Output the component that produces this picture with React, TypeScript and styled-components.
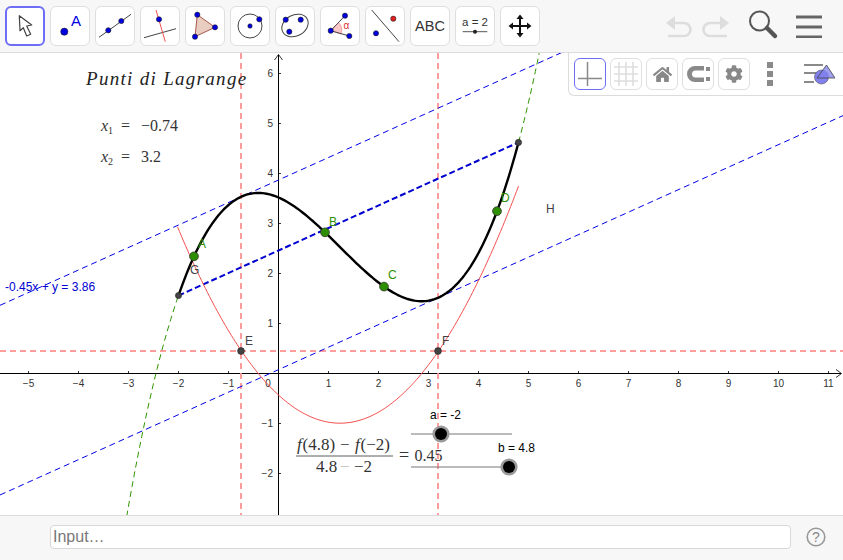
import React from 'react';
import styled, { createGlobalStyle } from 'styled-components';
import { FaCog, FaHome } from 'react-icons/fa';

const GlobalStyle = createGlobalStyle`
  html, body {
    margin: 0;
    padding: 0;
    overflow: hidden;
    background: #ffffff;
    font-family: "Liberation Sans", Arial, sans-serif;
  }
`;

const Page = styled.div`
  width: 843px;
  height: 560px;
  display: flex;
  flex-direction: column;
`;

const Toolbar = styled.div`
  height: 53px;
  box-sizing: border-box;
  flex: none;
  display: flex;
  align-items: flex-start;
  padding: 6px 20px 0 5px;
  background: #f7f7f7;
  border-bottom: 1px solid #dcdcdc;
`;

const ToolGroup = styled.div`
  display: flex;
  gap: 5px;
`;

const ToolButton = styled.div<{ $active?: boolean }>`
  width: 40px;
  height: 40px;
  box-sizing: border-box;
  display: flex;
  align-items: center;
  justify-content: center;
  background: #ffffff;
  border-radius: 6px;
  border: ${(p) => (p.$active ? '2px solid #6d6df5' : '1px solid #dfdfdf')};
  color: #333333;
  font-size: 14.5px;
  svg {
    flex: none;
    margin: ${(p) => (p.$active ? '-2px' : '-1px')};
  }
`;

const ActionGroup = styled.div`
  margin-left: auto;
  display: flex;
  align-items: center;
  height: 40px;
  gap: 7px;
`;

const Canvas = styled.div`
  position: relative;
  flex: 1;
  min-height: 0;
  overflow: hidden;
  background: #ffffff;
`;

const Plot = styled.svg`
  display: block;
  width: 843px;
  height: 462px;
`;

const StyleBar = styled.div`
  position: absolute;
  top: 0;
  right: 0;
  width: 275px;
  height: 43px;
  box-sizing: border-box;
  display: flex;
  align-items: flex-start;
  gap: 4px;
  padding: 5px 0 0 5px;
  background: #ffffff;
  border-left: 1px solid #dcdcdc;
  border-bottom: 1px solid #dcdcdc;
  border-bottom-left-radius: 6px;
`;

const StyleButton = styled.div<{ $active?: boolean }>`
  width: 32px;
  height: 32px;
  flex: none;
  box-sizing: border-box;
  display: flex;
  align-items: center;
  justify-content: center;
  border-radius: 6px;
  border: 1px solid ${(p) => (p.$active ? '#6d6df5' : '#dfdfdf')};
  color: #888888;
  svg {
    flex: none;
  }
`;

const Dots = styled.div`
  width: 6px;
  flex: none;
  margin: 4px 0 0 13px;
  display: flex;
  flex-direction: column;
  gap: 3px;
`;

const Dot = styled.div`
  height: 6px;
  background: #8a8a8a;
`;

const StyleIcon = styled.svg`
  margin-left: 26px;
  flex: none;
`;

const InputBar = styled.div`
  height: 45px;
  box-sizing: border-box;
  flex: none;
  display: flex;
  align-items: center;
  padding: 0 17px 2px 50px;
  background: #f7f7f7;
  border-top: 1px solid #dcdcdc;
`;

const InputBox = styled.input`
  width: 741px;
  height: 24px;
  box-sizing: border-box;
  padding: 0 2px;
  background: #ffffff;
  border: 1px solid #d8d8d8;
  border-radius: 4px;
  font-family: "Liberation Sans", Arial, sans-serif;
  font-size: 16px;
  outline: none;
  &::placeholder {
    color: #777777;
    opacity: 1;
  }
`;

const HelpIcon = styled.svg`
  margin-left: auto;
  flex: none;
`;

const TickLabel = styled.text<{ $anchor?: string }>`
  font-family: "Liberation Sans", Arial, sans-serif;
  font-size: 10px;
  fill: #333333;
  text-anchor: ${(p) => p.$anchor || 'middle'};
`;

const PointLabel = styled.text<{ $color: string }>`
  font-family: "Liberation Sans", Arial, sans-serif;
  font-size: 12px;
  fill: ${(p) => p.$color};
`;

const MathText = styled.text<{ $size?: number }>`
  font-family: "Liberation Serif", "Times New Roman", serif;
  font-size: ${(p) => p.$size || 16}px;
  fill: #333333;
`;

const TitleText = styled.text`
  font-family: "Liberation Serif", "Times New Roman", serif;
  font-style: italic;
  font-size: 19px;
  letter-spacing: 1.3px;
  fill: #222222;
`;

const IconText = styled.text<{ $color: string; $size: number }>`
  font-family: "Liberation Sans", Arial, sans-serif;
  font-size: ${(p) => p.$size}px;
  fill: ${(p) => p.$color};
  text-anchor: middle;
`;

const BLUE = '#0000e6';

const px = (x: number) => 278.5 + 50 * x;
const py = (y: number) => 373.5 - 50 * y;
const f = (x: number) => 0.124 * x ** 3 - 0.4576 * x ** 2 - 0.431 * x + 3.52;
const df = (x: number) => 0.372 * (x + 0.74) * (x - 3.2) + 0.45;

const curve = (fn: (x: number) => number, from: number, to: number) => {
  const parts: string[] = [];
  const steps = Math.ceil((to - from) / 0.04);
  for (let i = 0; i <= steps; i++) {
    const x = from + ((to - from) * i) / steps;
    parts.push(`${i === 0 ? 'M' : 'L'}${px(x).toFixed(2)} ${py(fn(x)).toFixed(2)}`);
  }
  return parts.join(' ');
};

const xTicks = [-5, -4, -3, -2, -1, 1, 2, 3, 4, 5, 6, 7, 8, 9, 10, 11];
const yTicks = [-2, -1, 1, 2, 3, 4, 5, 6];
const num = (n: number) => (n < 0 ? `\u2212${-n}` : `${n}`);

const greenPoints = [
  { x: -1.69, name: 'A', lx: 198, ly: 248 },
  { x: 0.93, name: 'B', lx: 329, ly: 226 },
  { x: 2.11, name: 'C', lx: 388, ly: 279 },
  { x: 4.37, name: 'D', lx: 501, ly: 202 },
];

function BluePoint({ x, y, r = 2.6, color = '#0000e0' }: { x: number; y: number; r?: number; color?: string }) {
  return <circle cx={x} cy={y} r={r} fill={color} stroke="#222" strokeWidth={0.6} />;
}

function Icon({ children }: { children: React.ReactNode }) {
  return (
    <svg width="40" height="40" viewBox="0 0 40 40">
      {children}
    </svg>
  );
}

function Tools() {
  return (
    <ToolGroup>
      <ToolButton $active>
        <Icon>
          <path d="M14.3 9.7 L15 24.7 L18.3 21.7 L21.7 30 L25.7 28.3 L21.7 20 L26.7 19 Z" fill="#fff" stroke="#444" strokeWidth="1.2" strokeLinejoin="round" />
        </Icon>
      </ToolButton>
      <ToolButton>
        <Icon>
          <BluePoint x={14.3} y={25.7} r={3.6} />
          <IconText x={26} y={20} $color="#0000e0" $size={15}>A</IconText>
        </Icon>
      </ToolButton>
      <ToolButton>
        <Icon>
          <line x1="4" y1="31.3" x2="36" y2="8.3" stroke="#444" strokeWidth="1" />
          <BluePoint x={13.3} y={24.3} />
          <BluePoint x={26.3} y={15} />
        </Icon>
      </ToolButton>
      <ToolButton>
        <Icon>
          <line x1="4" y1="31.7" x2="36" y2="22.7" stroke="#444" strokeWidth="1" />
          <line x1="16" y1="4" x2="25.3" y2="35.7" stroke="#f05050" strokeWidth="1" />
          <BluePoint x={19} y={13.3} />
        </Icon>
      </ToolButton>
      <ToolButton>
        <Icon>
          <polygon points="12.3,8.7 30,21.3 10,30.7" fill="#e8cdc0" stroke="#a8584a" strokeWidth="1" />
          <BluePoint x={12.3} y={8.7} />
          <BluePoint x={30} y={21.3} />
          <BluePoint x={10} y={30.7} />
        </Icon>
      </ToolButton>
      <ToolButton>
        <Icon>
          <circle cx="20" cy="20" r="12" fill="none" stroke="#444" strokeWidth="1" />
          <BluePoint x={20} y={20} r={2.2} />
          <BluePoint x={29.3} y={13.3} />
        </Icon>
      </ToolButton>
      <ToolButton>
        <Icon>
          <ellipse cx="20" cy="19.5" rx="13.8" ry="10.5" transform="rotate(-28 20 19.5)" fill="none" stroke="#444" strokeWidth="1" />
          <BluePoint x={10.7} y={13.7} />
          <BluePoint x={25.7} y={13.7} />
          <BluePoint x={14.3} y={25.7} />
        </Icon>
      </ToolButton>
      <ToolButton>
        <Icon>
          <path d="M10.7 24.7 L18.5 16.5 A11 11 0 0 1 21 28 Z" fill="#fbc8c8" stroke="#e88" strokeWidth="0.7" />
          <line x1="10.7" y1="24.7" x2="25" y2="9.7" stroke="#444" strokeWidth="1" />
          <line x1="10.7" y1="24.7" x2="29.3" y2="30" stroke="#444" strokeWidth="1" />
          <BluePoint x={10.7} y={24.7} />
          <BluePoint x={25} y={9.7} />
          <BluePoint x={29.3} y={30} />
          <IconText x={26.5} y={23} $color="#e03030" $size={10}>α</IconText>
        </Icon>
      </ToolButton>
      <ToolButton>
        <Icon>
          <line x1="6.7" y1="4" x2="34" y2="35.7" stroke="#444" strokeWidth="1" />
          <BluePoint x={28.3} y={12.7} color="#e02020" />
          <BluePoint x={11} y={27.3} />
        </Icon>
      </ToolButton>
      <ToolButton>ABC</ToolButton>
      <ToolButton>
        <Icon>
          <IconText x={20} y={19.5} $color="#333" $size={11.5}>a = 2</IconText>
          <line x1="7.7" y1="25.7" x2="32.3" y2="25.7" stroke="#555" strokeWidth="1" />
          <circle cx="20" cy="25.7" r="2" fill="#222" />
        </Icon>
      </ToolButton>
      <ToolButton>
        <Icon>
          <path d="M20 12 V28 M12 20 H28" stroke="#111" strokeWidth="2" />
          <path d="M20 8.5 L16.5 13 H23.5 Z M20 31.5 L16.5 27 H23.5 Z M8.5 20 L13 16.5 V23.5 Z M31.5 20 L27 16.5 V23.5 Z" fill="#111" />
        </Icon>
      </ToolButton>
    </ToolGroup>
  );
}

function Actions() {
  return (
    <ActionGroup>
      <svg width="28" height="24" viewBox="0 0 28 24" fill="none" stroke="#dddddd">
        <path d="M6 9 H19 A6.5 6.5 0 0 1 19 22 H3" strokeWidth="2.6" />
        <path d="M1 9 L10 2 V16 Z" fill="#dddddd" strokeWidth="0" />
      </svg>
      <svg width="30" height="24" viewBox="0 0 30 24" fill="none" stroke="#dddddd" style={{ marginRight: 10 }}>
        <path d="M24 9 H10 A6.5 6.5 0 0 0 10 22 H27" strokeWidth="2.6" />
        <path d="M29 9 L20 2 V16 Z" fill="#dddddd" strokeWidth="0" />
      </svg>
      <svg width="32" height="32" viewBox="0 0 32 32" fill="none" stroke="#555555" style={{ marginRight: 9 }}>
        <circle cx="12.5" cy="11" r="9.5" strokeWidth="2" />
        <line x1="20" y1="18" x2="28" y2="26" strokeWidth="4.5" strokeLinecap="round" />
      </svg>
      <svg width="28" height="24" viewBox="0 0 28 24" stroke="#666666" strokeWidth="3">
        <path d="M1 3 H27 M1 13 H27 M1 23 H27" />
      </svg>
    </ActionGroup>
  );
}

function StyleBarPanel() {
  return (
    <StyleBar>
      <StyleButton $active>
        <svg width="30" height="30" viewBox="0 0 30 30" stroke="#8a8a8a" strokeWidth="1.5">
          <path d="M3 19.5 H27 M12.5 3 V27" />
        </svg>
      </StyleButton>
      <StyleButton>
        <svg width="30" height="30" viewBox="0 0 30 30" stroke="#dedede" strokeWidth="1.6">
          <path d="M3 8 H27 M3 15 H27 M3 22 H27 M8 3 V27 M15 3 V27 M22 3 V27" />
        </svg>
      </StyleButton>
      <StyleButton>
        <FaHome size={19} />
      </StyleButton>
      <StyleButton>
        <svg width="30" height="30" viewBox="0 0 30 30" fill="#8a8a8a">
          <path d="M21 7 H12 A8 8 0 0 0 12 23 H21 V18.5 H12.5 A3.5 3.5 0 0 1 12.5 11.5 H21 Z" />
          <rect x="23" y="8" width="4" height="4" />
          <rect x="23" y="18" width="4" height="4" />
        </svg>
      </StyleButton>
      <StyleButton>
        <FaCog size={18} />
      </StyleButton>
      <Dots>
        <Dot />
        <Dot />
        <Dot />
      </Dots>
      <StyleIcon width="32" height="32" viewBox="0 0 32 32">
        <path d="M1 7 H20 M1 15 H14 M1 24 H11" stroke="#8a8a8a" strokeWidth="2" />
        <circle cx="18.5" cy="19" r="7" fill="#8080ee" stroke="#555" strokeWidth="0.6" />
        <polygon points="23.5,7 32,20 14,20" fill="#8080ee" fillOpacity="0.75" stroke="#444" strokeWidth="0.8" />
      </StyleIcon>
    </StyleBar>
  );
}

function Graph() {
  const chordY1 = py(f(-2));
  const chordY2 = py(f(4.8));
  return (
    <Plot viewBox="0 53 843 462">
      {/* axes */}
      <line x1="0" y1="373.5" x2="841" y2="373.5" stroke="#000" strokeWidth="1" />
      <line x1="278.5" y1="55" x2="278.5" y2="515" stroke="#000" strokeWidth="1" />
      <path d="M836 369.5 L841.5 373.5 L836 377.5" fill="none" stroke="#000" strokeWidth="0.8" />
      <path d="M274.5 60 L278.5 54.5 L282.5 60" fill="none" stroke="#000" strokeWidth="0.8" />
      {xTicks.map((t) => (
        <g key={t}>
          <line x1={px(t)} y1="371" x2={px(t)} y2="373.5" stroke="#000" strokeWidth="0.8" />
          <TickLabel x={px(t)} y="387">{num(t)}</TickLabel>
        </g>
      ))}
      {yTicks.map((t) => (
        <g key={t}>
          <line x1="278.5" y1={py(t)} x2="281" y2={py(t)} stroke="#000" strokeWidth="0.8" />
          <TickLabel x="273" y={py(t) + 3.5} $anchor="end">{num(t)}</TickLabel>
        </g>
      ))}
      <TickLabel x="268" y="387">0</TickLabel>

      {/* lagrange guides */}
      <line x1="241" y1="53" x2="241" y2="515" stroke="#ff9292" strokeWidth="1.8" strokeDasharray="6 4" />
      <line x1="438" y1="53" x2="438" y2="515" stroke="#ff9292" strokeWidth="1.8" strokeDasharray="6 4" />
      <line x1="0" y1="351" x2="843" y2="351" stroke="#ff3c3c" strokeWidth="1" strokeDasharray="6 4" />

      {/* parallels */}
      <line x1={0} y1={py(0.45 * -5.57 + 3.87)} x2={843} y2={py(0.45 * 11.29 + 3.87)} stroke={BLUE} strokeWidth="1" strokeDasharray="6 4" />
      <line x1={0} y1={py(0.45 * -5.57 + 0.077)} x2={843} y2={py(0.45 * 11.29 + 0.077)} stroke={BLUE} strokeWidth="1" strokeDasharray="6 4" />
      <line x1={px(-2)} y1={chordY1} x2={px(4.8)} y2={chordY2} stroke="#0000d0" strokeWidth="2" strokeDasharray="6 3" />

      {/* curves */}
      <path d={curve(f, -3.2, -2)} fill="none" stroke="#2e9400" strokeWidth="1" strokeDasharray="6 4" />
      <path d={curve(f, 4.8, 5.4)} fill="none" stroke="#2e9400" strokeWidth="1" strokeDasharray="6 4" />
      <path d={curve(df, -2.02, 4.8)} fill="none" stroke="#f55050" strokeWidth="1" />
      <path d={curve(f, -2, 4.8)} fill="none" stroke="#000" strokeWidth="2.4" />

      {/* points */}
      {greenPoints.map((p) => (
        <g key={p.name}>
          <circle cx={px(p.x)} cy={py(f(p.x))} r="4.4" fill="#2d8f00" stroke="#333" strokeWidth="0.8" />
          <PointLabel x={p.lx} y={p.ly} $color="#2d8f00">{p.name}</PointLabel>
        </g>
      ))}
      <circle cx={px(-2)} cy={chordY1} r="3.1" fill="#444" stroke="#222" strokeWidth="0.6" />
      <circle cx={px(4.8)} cy={chordY2} r="3.1" fill="#444" stroke="#222" strokeWidth="0.6" />
      <circle cx="241" cy="351" r="3.4" fill="#444" stroke="#222" strokeWidth="0.6" />
      <circle cx="438" cy="351" r="3.4" fill="#444" stroke="#222" strokeWidth="0.6" />
      <PointLabel x="190" y="274" $color="#444">G</PointLabel>
      <PointLabel x="245" y="345" $color="#444">E</PointLabel>
      <PointLabel x="442" y="345" $color="#444">F</PointLabel>
      <PointLabel x="546" y="213" $color="#444">H</PointLabel>
      <PointLabel x="5" y="291" $color="#0000d0">-0.45x + y = 3.86</PointLabel>

      {/* texts */}
      <TitleText x="86" y="85">Punti di Lagrange</TitleText>
      <MathText x="101" y="131">
        <tspan fontStyle="italic">x</tspan>
        <tspan fontSize="10" dy="3">1</tspan>
        <tspan x="121" dy="-3">=</tspan>
        <tspan x="141">−0.74</tspan>
      </MathText>
      <MathText x="101" y="162">
        <tspan fontStyle="italic">x</tspan>
        <tspan fontSize="10" dy="3">2</tspan>
        <tspan x="121" dy="-3">=</tspan>
        <tspan x="141">3.2</tspan>
      </MathText>

      {/* formula */}
      <MathText x="297" y="450" $size={17}>
        <tspan fontStyle="italic">f</tspan>
        <tspan x="302.5">(4.8)</tspan>
        <tspan x="340">−</tspan>
        <tspan x="355" fontStyle="italic">f</tspan>
        <tspan x="360.5">(−2)</tspan>
      </MathText>
      <line x1="296" y1="456" x2="393" y2="456" stroke="#333" strokeWidth="0.8" />
      <MathText x="316" y="472" $size={17}>
        4.8
        <tspan x="340" fill="#bbbbbb">−</tspan>
        <tspan x="354">−2</tspan>
      </MathText>
      <MathText x="399" y="461" $size={16}>
        <tspan fontSize="18">=</tspan>
        <tspan x="414.5">0.45</tspan>
      </MathText>

      {/* sliders */}
      <line x1="411" y1="434" x2="512" y2="434" stroke="#777" strokeWidth="1" />
      <circle cx="441" cy="434" r="8.6" fill="#999" />
      <circle cx="441" cy="434" r="6" fill="#000" />
      <PointLabel x="430" y="419" $color="#000">a = -2</PointLabel>
      <line x1="411" y1="467" x2="510" y2="467" stroke="#777" strokeWidth="1" />
      <circle cx="509" cy="467" r="8.6" fill="#999" />
      <circle cx="509" cy="467" r="6" fill="#000" />
      <PointLabel x="498" y="452" $color="#000">b = 4.8</PointLabel>
    </Plot>
  );
}

export default function App() {
  return (
    <Page>
      <GlobalStyle />
      <Toolbar>
        <Tools />
        <Actions />
      </Toolbar>
      <Canvas>
        <Graph />
        <StyleBarPanel />
      </Canvas>
      <InputBar>
        <InputBox placeholder="Input…" />
        <HelpIcon width="20" height="20" viewBox="0 0 20 20">
          <circle cx="10" cy="10" r="8.8" fill="none" stroke="#999" strokeWidth="1.6" />
          <IconText x={10} y={15} $color="#888" $size={14}>?</IconText>
        </HelpIcon>
      </InputBar>
    </Page>
  );
}
